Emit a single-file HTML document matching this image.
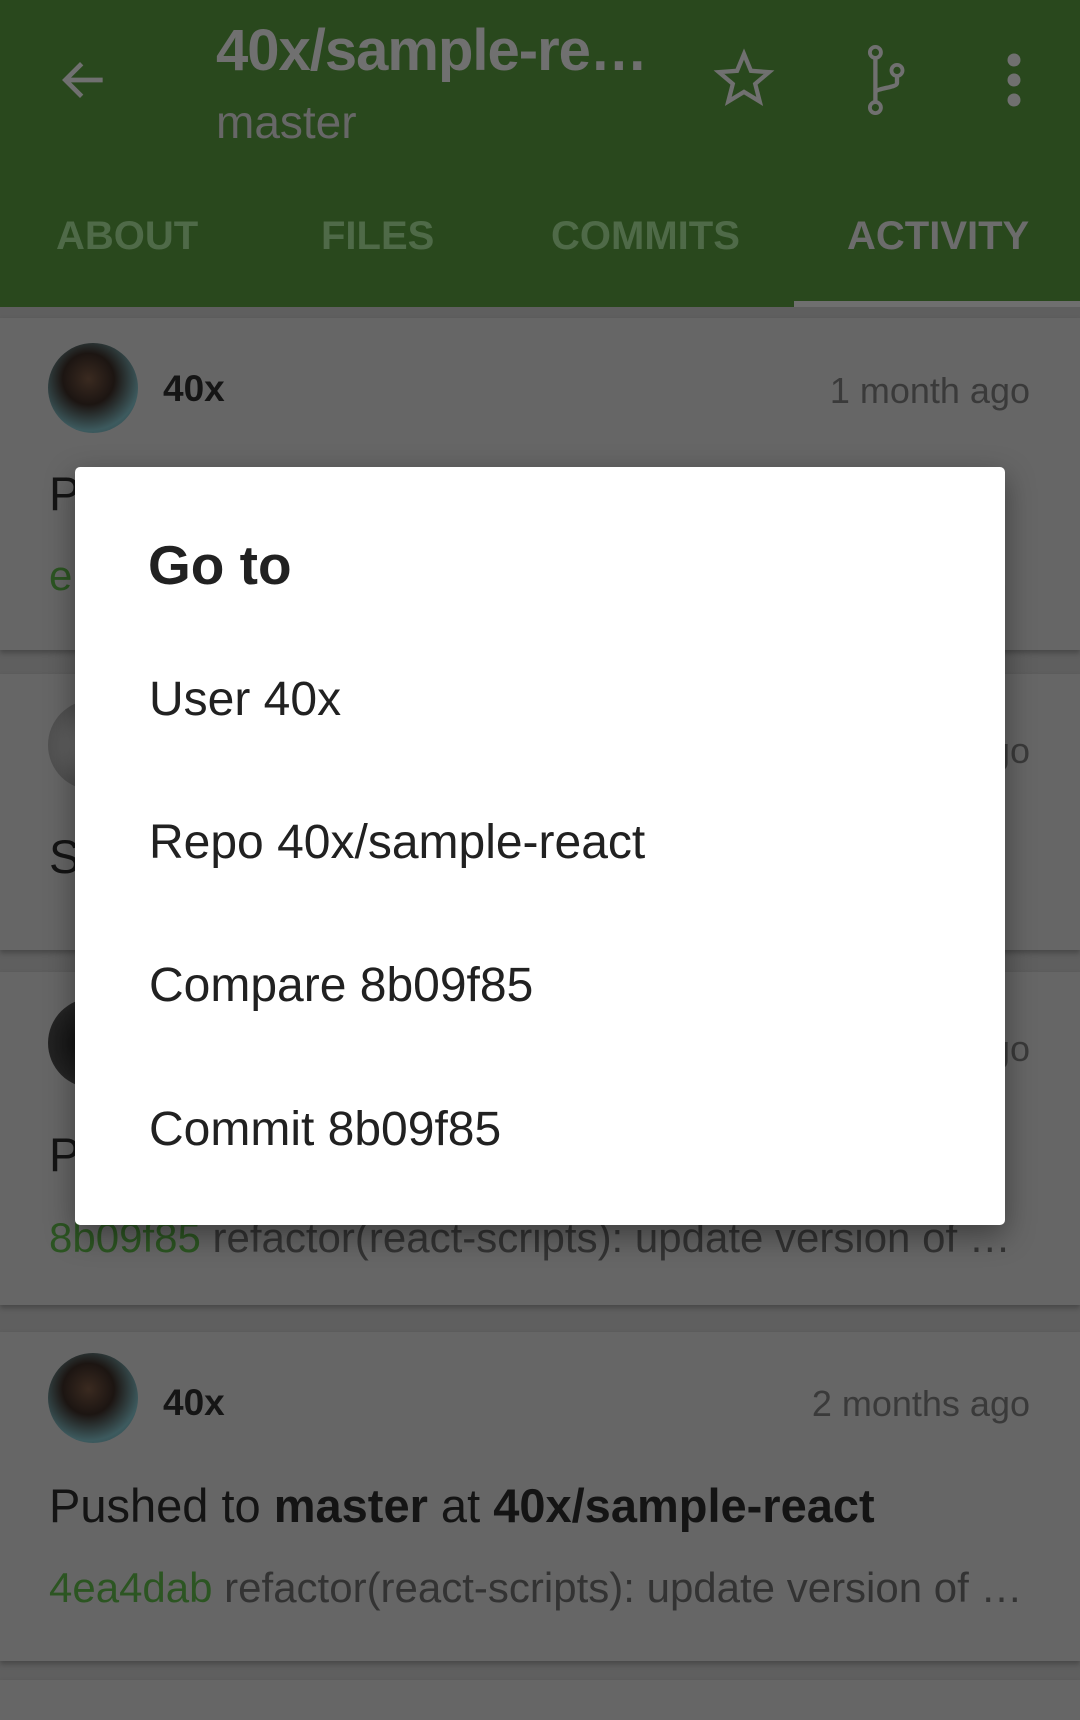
<!DOCTYPE html>
<html><head><meta charset="utf-8"><style>
*{margin:0;padding:0;box-sizing:border-box}
body{width:1080px;height:1699px;background:#5f5f5f;position:relative;overflow:hidden;font-family:"Liberation Sans",sans-serif}
.abs{position:absolute;white-space:nowrap}
.bar{position:absolute;left:0;top:0;width:1080px;height:307px;background:#29481d}
.card{position:absolute;left:0;width:1080px;background:#666;box-shadow:0 3px 5px rgba(0,0,0,.25)}
.av{position:absolute;left:48px;width:90px;height:90px;border-radius:50%;background:radial-gradient(circle at 45% 40%,#3a2a20 0,#1c1512 35%,#3d5a5e 70%,#2d4a50 100%)}
.name{font-weight:bold;font-size:37px;color:#151515;left:163px}
.time{font-size:36px;color:#3a3a3a;right:50px}
.t1{font-size:47px;color:#141414;left:49px}
.t2{font-size:42px;color:#333;left:49px}
.g{color:#2c5522}
.dlg{position:absolute;left:75px;top:467px;width:930px;height:758px;background:#fff;border-radius:5px;box-shadow:0 10px 30px rgba(0,0,0,.4)}
.it{font-size:48px;color:#212121;left:74px}
</style></head><body>
<div class="bar"></div>
<svg class="abs" style="left:56px;top:52px" width="56" height="56" viewBox="0 0 24 24"><path d="M20 12H5M11 5l-7 7 7 7" fill="none" stroke="#707070" stroke-width="2"/></svg>
<div class="abs" style="left:216px;top:17px;font-size:58px;font-weight:bold;color:#707070;letter-spacing:-1px">40x/sample-re…</div>
<div class="abs" style="left:216px;top:95px;font-size:46px;color:#676767">master</div>
<svg class="abs" style="left:712px;top:46px" width="64" height="64" viewBox="0 0 24 24"><path d="M12 3l2.6 6.3 6.8.5-5.2 4.4 1.7 6.6L12 17.2 6.1 20.8l1.7-6.6L2.6 9.8l6.8-.5z" fill="none" stroke="#707070" stroke-width="1.6" stroke-linejoin="miter"/></svg>
<svg class="abs" style="left:860px;top:44px" width="50" height="72" viewBox="0 0 20 30"><circle cx="6" cy="3.5" r="2.3" fill="none" stroke="#707070" stroke-width="1.6"/><circle cx="6" cy="26.5" r="2.3" fill="none" stroke="#707070" stroke-width="1.6"/><circle cx="15" cy="11" r="2.3" fill="none" stroke="#707070" stroke-width="1.6"/><path d="M6 6v18M15 13.3v3c0 2-9 2-9 4" fill="none" stroke="#707070" stroke-width="1.8"/></svg>
<svg class="abs" style="left:999px;top:53px" width="30" height="54" viewBox="0 0 30 54"><circle cx="15" cy="7" r="6.5" fill="#707070"/><circle cx="15" cy="27" r="6.5" fill="#707070"/><circle cx="15" cy="47" r="6.5" fill="#707070"/></svg>
<div class="abs" style="left:56px;top:214px;font-size:40px;font-weight:bold;color:#4f6a48">ABOUT</div>
<div class="abs" style="left:321px;top:214px;font-size:40px;font-weight:bold;color:#4f6a48">FILES</div>
<div class="abs" style="left:551px;top:214px;font-size:40px;font-weight:bold;color:#4f6a48">COMMITS</div>
<div class="abs" style="left:847px;top:214px;font-size:40px;font-weight:bold;color:#6c6c6c">ACTIVITY</div>
<div class="abs" style="left:794px;top:301px;width:286px;height:6px;background:#6f6f6f"></div>

<div class="card" style="top:318px;height:332px">
<div class="av" style="top:25px"></div>
<div class="abs name" style="top:50px">40x</div>
<div class="abs time" style="top:52px">1 month ago</div>
<div class="abs t1" style="top:148px">Pushed to <b>master</b> at <b>40x/sample-react</b></div>
<div class="abs t2" style="top:234px"><span class="g">e1f2a3b</span> refactor(react-scripts): update version of …</div>
</div>
<div class="card" style="top:674px;height:276px">
<div class="av" style="top:26px;background:radial-gradient(circle,#777 0,#555 60%,#444 100%)"></div>
<div class="abs name" style="top:52px">40x</div>
<div class="abs time" style="top:56px">2 months ago</div>
<div class="abs t1" style="top:155px">Starred 40x/sample-react</div>
</div>
<div class="card" style="top:972px;height:333px">
<div class="av" style="top:26px;background:radial-gradient(circle at 40% 50%,#111 0,#222 50%,#444 100%)"></div>
<div class="abs name" style="top:54px">40x</div>
<div class="abs time" style="top:56px">2 months ago</div>
<div class="abs t1" style="top:155px">Pushed to <b>master</b> at <b>40x/sample-react</b></div>
<div class="abs t2" style="top:242px"><span class="g">8b09f85</span> refactor(react-scripts): update version of …</div>
</div>
<div class="card" style="top:1332px;height:329px">
<div class="av" style="top:21px"></div>
<div class="abs name" style="top:50px">40x</div>
<div class="abs time" style="top:51px">2 months ago</div>
<div class="abs t1" style="top:146px">Pushed to <b>master</b> at <b>40x/sample-react</b></div>
<div class="abs t2" style="top:232px"><span class="g">4ea4dab</span> refactor(react-scripts): update version of …</div>
</div>
<div class="card" style="top:1680px;height:40px"></div>

<div class="dlg">
<div class="abs" style="left:73px;top:66px;font-size:55px;font-weight:bold;color:#212121">Go to</div>
<div class="abs it" style="top:205px">User 40x</div>
<div class="abs it" style="top:348px">Repo 40x/sample-react</div>
<div class="abs it" style="top:491px">Compare 8b09f85</div>
<div class="abs it" style="top:635px">Commit 8b09f85</div>
</div>
</body></html>
